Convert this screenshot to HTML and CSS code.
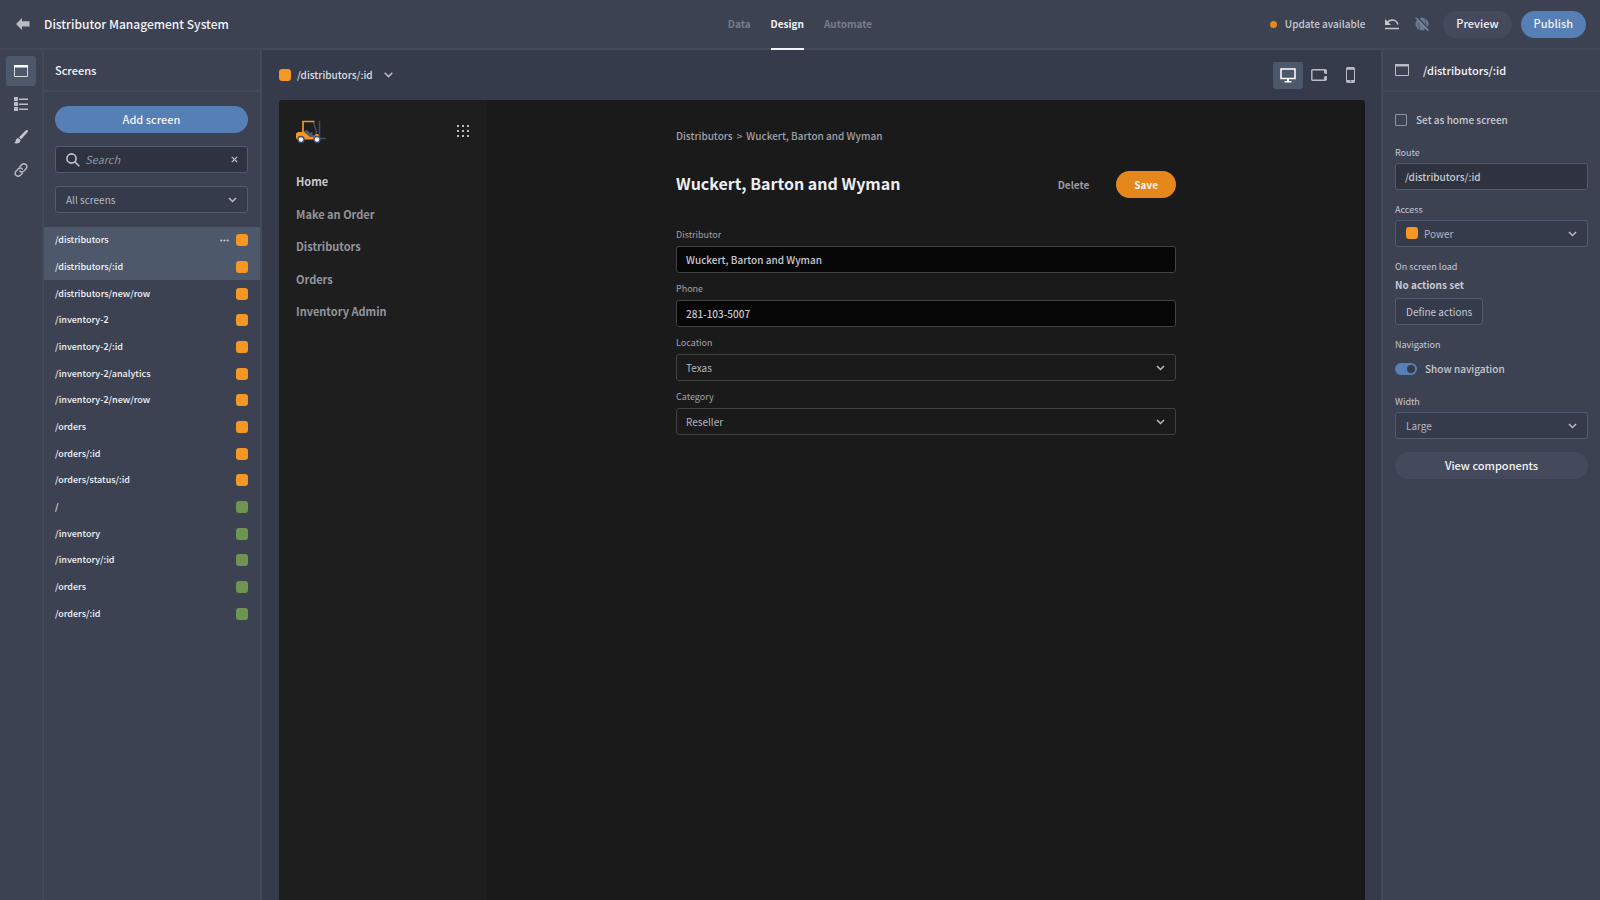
FILE: index.html
```html
<!DOCTYPE html>
<html lang="en">
<head>
<meta charset="utf-8">
<title>Distributor Management System</title>
<link rel="stylesheet" href="styles.css">
</head>
<body>
<div class="app">
  <header class="topbar">
    <div class="topbar-left">
      <button class="icon-btn" aria-label="Back"><svg width="14" height="12" viewBox="0 0 14 12"><path fill="#b9bcc6" d="M0 6l6-6v3.300h7.500v5.200H6V12z"/></svg></button>
      <h1 class="app-title">Distributor Management System</h1>
    </div>
    <nav class="tabs">
      <a class="tab" href="#">Data</a>
      <a class="tab tab-active" href="#">Design</a>
      <a class="tab" href="#">Automate</a>
    </nav>
    <div class="topbar-right">
      <span class="update"><i class="update-dot"></i>Update available</span>
      <button class="icon-btn undo" aria-label="Undo"><svg width="14" height="12" viewBox="0 0 14 12" fill="none" stroke="#c3c6cf"><path stroke-width="1.500" d="M2 5C4.500 1 11 .5 13 6.500"/><path fill="#c3c6cf" stroke="none" d="M0 1v6h6z"/><path stroke-width="1.500" d="M0 10.500h14"/></svg></button>
      <button class="icon-btn globe" aria-label="Unpublish"><svg width="14" height="14" viewBox="0 0 14 14"><circle cx="7" cy="7" r="6.500" fill="#6c788f"/><path d="M5 1c-1.500 3.500-1.500 8.500 0 12M9.500 1c1.500 3.500 1.500 8.500 0 12" fill="none" stroke="#4a5265" stroke-width=".8"/><path d="M2 0L14 12.500" stroke="#3d4252" stroke-width="1.600"/><path d="M.7.700L13.300 13.500" stroke="#8690a3" stroke-width="1.200"/></svg></button>
      <button class="pill pill-quiet">Preview</button>
      <button class="pill pill-blue">Publish</button>
    </div>
  </header>

  <div class="workspace">
    <nav class="rail">
      <button class="rail-btn rail-active" aria-label="Screens"><svg width="14" height="12" viewBox="0 0 14 12"><path d="M.5.5h13v11H.5z" fill="none" stroke="#d4d7de"/><path d="M0 0h14v2.500H0z" fill="#fff"/></svg></button>
      <button class="rail-btn" aria-label="Components"><svg width="14" height="14" viewBox="0 0 14 14" fill="#b9bcc6"><path d="M0 0h4v4H0zM0 5h4v4H0zM0 10h4v4H0zM5 1.500h9V3H5zM5 6.500h9V8H5zM5 11.500h9V13H5z"/></svg></button>
      <button class="rail-btn" aria-label="Theme"><svg width="14" height="14" viewBox="0 0 14 14" fill="#c3c6cf"><path d="M13.700.3c-.8-.7-1.600-.1-2.300.5L5 7.300l2 2.100 6.200-7c.6-.7 1-1.500.5-2.100zM4.300 8C2.500 8 2 9.500 1.700 10.700 1.500 11.800.8 12.600 0 13c2.500 1 6.300.7 6.600-2.800z"/></svg></button>
      <button class="rail-btn" aria-label="Links"><svg width="14" height="14" viewBox="0 0 14 14" fill="none" stroke="#b9bcc6" stroke-width="1.400" stroke-linecap="round"><path d="M5.700 3.800l2-2c1.300-1.300 3-1.200 4.200-.2 1.300 1.200 1.300 3 .1 4.200L9.700 8.200c-1.200 1.100-2.900 1-4-.2"/><path d="M8.300 10.200l-2 2c-1.300 1.300-3 1.200-4.200.2C.8 11.200.8 9.400 2 8.200l2.300-2.400c1.200-1.100 2.900-1 4 .2"/></svg></button>
    </nav>

    <aside class="screens">
      <h2 class="panel-head">Screens</h2>
      <div class="screens-tools">
        <button class="pill pill-blue pill-wide">Add screen</button>
        <div class="field search">
          <svg width="14" height="14" viewBox="0 0 14 14" fill="none" stroke="#c3c6cf" stroke-width="1.600"><circle cx="5.500" cy="5.500" r="4.600"/><path d="M9 9l4.300 4.300"/></svg>
          <input class="search-input" type="text" placeholder="Search" aria-label="Search screens">
          <button class="icon-btn" aria-label="Clear search"><svg width="7" height="7" viewBox="0 0 7 7" stroke="#c3c6cf" stroke-width="1.200"><path d="M.8.800l5.400 5.400M6.200.800L.8 6.200"/></svg></button>
        </div>
        <div class="select-wrap">
          <select class="field select" aria-label="Filter screens"><option>All screens</option></select>
          <svg class="chevron" width="9" height="6" viewBox="0 0 9 6"><path d="M1 1l3.500 3.500L8 1"/></svg>
        </div>
      </div>
      <ul class="screen-list">
        <li class="screen screen-on"><a href="#">/distributors</a><svg width="9" height="3" viewBox="0 0 9 3" fill="#c3c6cf"><circle cx="1.300" cy="1.500" r="1.100"/><circle cx="4.500" cy="1.500" r="1.100"/><circle cx="7.700" cy="1.500" r="1.100"/></svg><i class="swatch"></i></li>
        <li class="screen screen-on"><a href="#">/distributors/:id</a><i class="swatch"></i></li>
        <li class="screen"><a href="#">/distributors/new/row</a><i class="swatch"></i></li>
        <li class="screen"><a href="#">/inventory-2</a><i class="swatch"></i></li>
        <li class="screen"><a href="#">/inventory-2/:id</a><i class="swatch"></i></li>
        <li class="screen"><a href="#">/inventory-2/analytics</a><i class="swatch"></i></li>
        <li class="screen"><a href="#">/inventory-2/new/row</a><i class="swatch"></i></li>
        <li class="screen"><a href="#">/orders</a><i class="swatch"></i></li>
        <li class="screen"><a href="#">/orders/:id</a><i class="swatch"></i></li>
        <li class="screen"><a href="#">/orders/status/:id</a><i class="swatch"></i></li>
        <li class="screen"><a href="#">/</a><i class="swatch swatch-green"></i></li>
        <li class="screen"><a href="#">/inventory</a><i class="swatch swatch-green"></i></li>
        <li class="screen"><a href="#">/inventory/:id</a><i class="swatch swatch-green"></i></li>
        <li class="screen"><a href="#">/orders</a><i class="swatch swatch-green"></i></li>
        <li class="screen"><a href="#">/orders/:id</a><i class="swatch swatch-green"></i></li>
      </ul>
    </aside>

    <main class="canvas">
      <div class="canvas-bar">
        <button class="route-picker"><i class="swatch"></i>/distributors/:id<svg class="chevron-inline" width="9" height="6" viewBox="0 0 9 6"><path d="M.7.800l3.800 3.800L8.300.800"/></svg></button>
        <div class="devices">
          <button class="device device-active" aria-label="Desktop"><svg width="16" height="15" viewBox="0 0 16 15"><path d="M1 1h14v9.500H1z" fill="none" stroke="#fff" stroke-width="1.500"/><path d="M7 11h2v2h2.500v1.500h-7V13H7z" fill="#fff"/></svg></button>
          <button class="device" aria-label="Tablet"><svg width="16" height="12" viewBox="0 0 16 12"><path d="M1.800.7h12.400c.6 0 1 .4 1 1v8.600c0 .6-.4 1-1 1H1.800c-.6 0-1-.4-1-1V1.700c0-.6.4-1 1-1z" fill="none" stroke="#b9bcc6" stroke-width="1.400"/><path d="M13 1h2.500v3.500H13zM13 7.500h2.500V11H13z" fill="#b9bcc6"/><path d="M14 5h2v2h-2z" fill="#363b4b"/></svg></button>
          <button class="device" aria-label="Phone"><svg width="9" height="16" viewBox="0 0 9 16"><path d="M.5 1.500c0-.6.400-1 1-1h6c.6 0 1 .4 1 1v13c0 .6-.4 1-1 1h-6c-.6 0-1-.4-1-1z" fill="none" stroke="#b9bcc6"/><path d="M.5.500h8v2.200h-8zM.5 13h8v2.500h-8z" fill="#b9bcc6"/><path d="M3.700 14.200h1.600" stroke="#363b4b"/></svg></button>
        </div>
      </div>

      <div class="preview">
        <aside class="app-nav">
          <div class="app-nav-top">
            <svg width="31" height="24" viewBox="0 0 31 24" role="img" aria-label="Forklift logo">
              <path d="M17.500 2l3 10-2 5M23.500 1v17.500H30" fill="none" stroke="#414c63" stroke-width="1.600"/>
              <path d="M8 11l3-1 3 3 2-1 1 1-1 2h3v3h-6l-5-4z" fill="#4d5870"/>
              <path d="M7 13V1.500h11.500" fill="none" stroke="#f59625" stroke-width="1.700"/>
              <path d="M0 18v-4.500L2 12h6l6 5h3.500l3-3h2v5.500H1z" fill="#f59625"/>
              <circle cx="5" cy="19.500" r="3.700" fill="#3d4d6b"/><circle cx="21" cy="19.500" r="3.700" fill="#3d4d6b"/>
              <circle cx="5" cy="19.500" r="2.300" fill="#f4f6fa"/><circle cx="21" cy="19.500" r="2.300" fill="#f4f6fa"/>
            </svg>
            <button class="icon-btn" aria-label="Apps"><svg width="14" height="14" viewBox="0 0 14 14" fill="#b9bac2"><path d="M1 1h2v2H1zM6 1h2v2H6zM11 1h2v2h-2zM1 6h2v2H1zM6 6h2v2H6zM11 6h2v2h-2zM1 11h2v2H1zM6 11h2v2H6zM11 11h2v2h-2z"/></svg></button>
          </div>
          <ul class="app-links">
            <li><a class="app-link app-link-on" href="#">Home</a></li>
            <li><a class="app-link" href="#">Make an Order</a></li>
            <li><a class="app-link" href="#">Distributors</a></li>
            <li><a class="app-link" href="#">Orders</a></li>
            <li><a class="app-link" href="#">Inventory Admin</a></li>
          </ul>
        </aside>
        <div class="app-main">
          <form class="record">
            <nav class="crumbs"><a href="#">Distributors</a><span>&gt;</span><span>Wuckert, Barton and Wyman</span></nav>
            <div class="record-head">
              <h2 class="record-title">Wuckert, Barton and Wyman</h2>
              <button type="button" class="pill pill-plain">Delete</button>
              <button type="button" class="pill pill-orange">Save</button>
            </div>
            <div class="record-field">
              <label for="distributor">Distributor</label>
              <input class="dark-field dark-input" id="distributor" type="text" value="Wuckert, Barton and Wyman">
            </div>
            <div class="record-field">
              <label for="phone">Phone</label>
              <input class="dark-field dark-input" id="phone" type="text" value="281-103-5007">
            </div>
            <div class="record-field">
              <label for="location">Location</label>
              <div class="select-wrap">
                <select class="dark-field select dark-select" id="location"><option>Texas</option></select>
                <svg class="chevron" width="9" height="6" viewBox="0 0 9 6"><path d="M1 1l3.500 3.500L8 1"/></svg>
              </div>
            </div>
            <div class="record-field">
              <label for="category">Category</label>
              <div class="select-wrap">
                <select class="dark-field select dark-select" id="category"><option>Reseller</option></select>
                <svg class="chevron" width="9" height="6" viewBox="0 0 9 6"><path d="M1 1l3.500 3.500L8 1"/></svg>
              </div>
            </div>
          </form>
        </div>
      </div>
    </main>

    <aside class="settings">
      <h2 class="panel-head settings-head"><svg width="14" height="12" viewBox="0 0 14 12"><path d="M.5.500h13v11H.5z" fill="none" stroke="#b9bcc6"/><path d="M0 0h14v2.500H0z" fill="#b9bcc6"/></svg>/distributors/:id</h2>
      <div class="settings-body">
        <label class="check-row"><input class="checkbox" type="checkbox">Set as home screen</label>
        <div class="setting">
          <label for="route">Route</label>
          <input class="field" id="route" type="text" value="/distributors/:id">
        </div>
        <div class="setting">
          <label for="access">Access</label>
          <div class="select-wrap">
            <i class="swatch swatch-inset"></i>
            <select class="field select select-swatch" id="access"><option>Power</option></select>
            <svg class="chevron" width="9" height="6" viewBox="0 0 9 6"><path d="M1 1l3.500 3.500L8 1"/></svg>
          </div>
        </div>
        <div class="setting">
          <span>On screen load</span>
          <strong class="no-actions">No actions set</strong>
          <button class="define">Define actions</button>
        </div>
        <div class="setting nav-setting">
          <span>Navigation</span>
          <label class="check-row toggle-row"><input class="toggle" type="checkbox" role="switch" checked>Show navigation</label>
        </div>
        <div class="setting">
          <label for="width">Width</label>
          <div class="select-wrap">
            <select class="field select" id="width"><option>Large</option></select>
            <svg class="chevron" width="9" height="6" viewBox="0 0 9 6"><path d="M1 1l3.500 3.500L8 1"/></svg>
          </div>
        </div>
        <button class="pill pill-quiet pill-wide">View components</button>
      </div>
    </aside>
  </div>
</div>
</body>
</html>
```
FILE: styles.css
```css
:root {
  --panel: #3d4252;
  --canvas: #363b4b;
  --line: #454a5b;
  --field-line: #515a70;
  --active: #4d586b;
  --blue: #557fb5;
  --orange: #f59625;
  --text: #c6c9d1;
  --bright: #f2f3f6;
}

* { box-sizing: border-box; }

body, h1, h2, ul { margin: 0; padding: 0; }
ul { list-style: none; }
a { color: inherit; text-decoration: none; }
svg { display: block; flex: none; }

body, button, input, select {
  font-family: "Noto Sans CJK SC", "Noto Sans", sans-serif;
  font-size: 10px;
  font-weight: 500;
  line-height: 16px;
  color: var(--text);
}

button { border: 0; padding: 0; background: none; }
input, select { outline: 0; }

.app { display: flex; flex-direction: column; height: 100vh; overflow: hidden; background: var(--panel); }

/* Top bar */
.topbar { display: grid; grid-template-columns: 1fr auto 1fr; height: 50px; border-bottom: 2px solid var(--line); }
.topbar-left { display: flex; align-items: center; gap: 14px; padding-left: 16px; }
.app-title { font-size: 12px; font-weight: 500; line-height: 20px; color: var(--bright); }
.tabs { display: flex; gap: 20px; margin-bottom: -2px; }
.tab { display: flex; align-items: center; border-bottom: 2px solid transparent; font-weight: 700; color: #757c8e; }
.tab-active { color: var(--bright); border-color: var(--bright); }
.topbar-right { display: flex; align-items: center; justify-content: flex-end; padding-right: 14px; }
.update { display: flex; align-items: center; gap: 8px; }
.update-dot { width: 7px; height: 7px; border-radius: 50%; background: #e88a1a; }
.undo { margin-left: 20px; }
.globe { margin: 0 14px 0 16px; }

.pill { display: flex; align-items: center; justify-content: center; height: 27px; padding: 0 13px 2px; border-radius: 14px; font-size: 11px; color: var(--bright); }
.pill-quiet { background: #444a5c; }
.pill-blue { background: var(--blue); }
.pill-orange { padding: 0 18px; background: #e5871b; font-size: 10px; font-weight: 700; }
.pill-plain { padding: 0 18px; font-size: 10px; font-weight: 700; color: #9b9ca3; }
.pill-wide { width: 100%; }
.pill + .pill { margin-left: 9px; }

/* Workspace columns */
.workspace { display: flex; flex: 1; min-height: 0; }
.rail { display: flex; flex-direction: column; align-items: center; gap: 3px; width: 44px; padding-top: 6px; border-right: 2px solid var(--line); }
.rail-btn { display: flex; align-items: center; justify-content: center; width: 30px; height: 30px; border-radius: 3px; }
.rail-active { background: var(--active); }

.screens { width: 218px; border-right: 2px solid var(--line); }
.panel-head { display: flex; align-items: center; gap: 14px; height: 42px; padding: 0 11px; border-bottom: 2px solid var(--line); font-size: 11px; font-weight: 500; color: var(--bright); }
.screens-tools { display: flex; flex-direction: column; gap: 13px; padding: 14px 12px 14px 11px; }

.field { width: 100%; height: 27px; padding: 0 9px; border: 1px solid var(--field-line); border-radius: 3px; background: #2e333f; }
.search { display: flex; align-items: center; gap: 5px; padding: 0 9px 0 10px; }
.search-input { flex: 1; min-width: 0; padding: 0 0 2px; border: 0; background: none; font-size: 11px; font-weight: 400; }
.search-input::placeholder { color: #8d92a1; font-style: italic; }
.select-wrap { position: relative; }
.select { appearance: none; display: block; width: 100%; padding-left: 10px; background: var(--canvas); font-weight: 400; color: #b4b7c0; }
.chevron { position: absolute; right: 11px; top: 11px; pointer-events: none; }
.chevron path, .chevron-inline path { fill: none; stroke: #b9bcc6; stroke-width: 1.500; }

.screen-list { display: grid; grid-auto-rows: 1fr; height: 400px; }
.screen { display: flex; align-items: center; gap: 7px; padding: 0 12px 0 11px; font-size: 9px; color: var(--bright); }
.screen a { flex: 1; }
.screen-on { background: var(--active); }
.swatch { flex: none; width: 12px; height: 12px; border-radius: 3px; background: var(--orange); }
.swatch-green { background: #6f9451; }

/* Canvas */
.canvas { display: flex; flex: 1; flex-direction: column; min-width: 0; padding: 0 16px 0 17px; background: var(--canvas); }
.canvas-bar { display: flex; align-items: center; justify-content: space-between; height: 50px; }
.route-picker { display: flex; align-items: center; gap: 6px; color: #dcdee3; }
.chevron-inline { margin-left: 5px; }
.devices { display: flex; gap: 1px; }
.device { display: flex; align-items: center; justify-content: center; width: 30px; height: 27px; border-radius: 3px; }
.device-active { background: var(--active); }

.preview { display: flex; flex: 1; background: #1a1a1a; color: #a0a1a8; border-radius: 3px 3px 0 0; overflow: hidden; }
.app-nav { width: 208px; padding: 20px 17px; background: #1e1e1e; }
.app-nav-top { display: flex; justify-content: space-between; height: 24px; }
.app-nav-top .icon-btn { align-self: flex-start; padding-top: 4px; }
.app-links { display: flex; flex-direction: column; justify-content: space-between; height: 150px; margin-top: 27px; }
.app-link { display: block; font-size: 11px; font-weight: 700; line-height: 20px; color: #94959c; }
.app-link-on { color: #c8c9cf; }

.app-main { flex: 1; padding: 28px 24px; }
.record { max-width: 500px; margin: 0 auto; }
.crumbs { display: flex; gap: 4px; }
.record-head { display: flex; align-items: center; margin: 27px 0 30px; }
.record-title { flex: 1; margin-bottom: 3px; font-size: 16px; font-weight: 700; line-height: 24px; color: #eceef3; }
.record-field { display: flex; flex-direction: column; gap: 4px; margin-bottom: 9px; font-size: 9px; font-weight: 400; line-height: 14px; }
.dark-field { width: 100%; height: 27px; padding: 0 9px; border: 1px solid #424242; border-radius: 3px; }
.dark-input { background: #070707; }
.dark-select { background: #1a1a1a; }

/* Settings */
.settings { width: 219px; border-left: 2px solid var(--line); }
.settings-head { padding: 0 12px; }
.settings-body { display: flex; flex-direction: column; padding: 20px 12px; }
.check-row { display: flex; align-items: center; gap: 9px; }
.checkbox { appearance: none; width: 12px; height: 12px; margin: 0; border: 1px solid #8d93a3; border-radius: 1px; }
.setting { display: flex; flex-direction: column; gap: 3px; margin-top: 13px; font-size: 9px; font-weight: 400; line-height: 14px; }
.check-row + .setting { margin-top: 18px; }
.swatch-inset { position: absolute; left: 11px; top: 7px; }
.select-swatch { padding-left: 28px; }
.no-actions { font-size: 10px; font-weight: 700; line-height: 16px; }
.define { align-self: flex-start; height: 27px; margin-top: 2px; padding: 0 10px; border: 1px solid var(--field-line); border-radius: 3px; background: var(--canvas); font-weight: 400; }
.toggle-row { gap: 8px; margin-top: 6px; font-size: 10px; font-weight: 500; line-height: 16px; }
.toggle { appearance: none; display: flex; justify-content: flex-end; width: 22px; height: 12px; margin: 0; padding: 2px; border-radius: 6px; background: var(--blue); }
.toggle::after { content: ""; width: 8px; height: 8px; border-radius: 50%; background: #363b4b; }
.nav-setting + .setting { margin-top: 18px; }
.settings-body > .pill { margin-top: 13px; }
```
